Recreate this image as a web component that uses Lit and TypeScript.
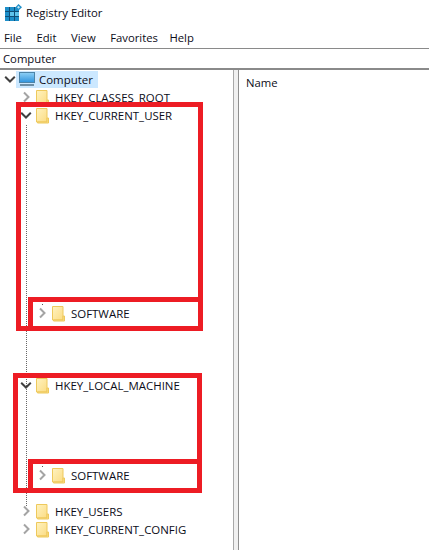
import { LitElement, html, css, svg } from "lit";
import { customElement } from "lit/decorators.js";

const folder = svg`<svg class="folder" width="14" height="17" viewBox="0 0 14 17">
  <defs><linearGradient id="fg" x1="0" y1="0" x2="1" y2="1"><stop offset="0" stop-color="#fff3c0"/><stop offset="1" stop-color="#fbdc84"/></linearGradient></defs>
  <path d="M.5 1.500h10.500v13.500H.5z" fill="url(#fg)" stroke="#eec95c"/>
  <path d="M11 11h1.500v5H1.500V15H11z" fill="#fbe08f" stroke="#eec95c" stroke-width="1"/>
</svg>`;
const chevR = html`<svg class="chev" width="9" height="12" viewBox="0 0 9 12"><path d="M2 1.500 6.500 6 2 10.500" fill="none" stroke="#a4a4a4" stroke-width="2"/></svg>`;
const chevD = html`<svg class="chev" width="12" height="9" viewBox="0 0 12 9"><path d="M1.200 1.800 6 6.500l4.800-4.700" fill="none" stroke="#404040" stroke-width="2"/></svg>`;

@customElement("app-root")
export class AppRoot extends LitElement {
  static styles = css`
    :host { display: block; width: 433px; height: 552px; background: #fff; position: relative; overflow: hidden;
      font-family: "Open Sans", "Noto Sans", sans-serif; font-size: 11.3px; color: #0c0c18; }
    .win { width: 429px; }
    .title { height: 25px; padding: 0 0 1px 5px; display: flex; align-items: center; gap: 4px; }
    .menu { height: 22px; display: flex; padding-left: 4px; align-items: center; }
    .menu span { margin-right: 14.500px; }
    .menu span:nth-child(4) { margin-right: 11.500px; }
    .addr { height: 19px; border-top: 1px solid #8a8a8a; border-bottom: 2px solid #8a8a8a; display: flex; align-items: center; padding-left: 3px; }
    .panes { display: flex; height: 480px; }
    .tree { width: 233px; position: relative; font-size: 11.450px; }
    .split { width: 4px; background: #f0f0f0; border-left: 1px solid #a8a8a8; border-right: 1px solid #8f8f8f; }
    .list { flex: 1; padding: 4px 0 0 7px; line-height: 17px; }
    .row { position: relative; height: 18px; display: flex; align-items: center; white-space: nowrap; gap: 5px; }
    .lv1 { padding-left: 36px; }
    .lv2 { padding-left: 52px; }
    .row.root { width: 80px; background: #cce8ff; margin: 1px 0 0 16px; padding-left: 2px; height: 17px; gap: 3px; }
    .slot { position: absolute; display: flex; align-items: center; justify-content: center; width: 12px; height: 12px; }
    .c0 { left: -12px; }
    .c1 { left: 20px; }
    .c2 { left: 36px; }
    .folder { flex: none; }
    .gap-user { margin-top: 180px; }
    .gap-local { margin-top: 54px; }
    .gap-soft { margin-top: 72px; }
    .gap-users { margin-top: 18px; }
    .dots { position: absolute; left: 26px; top: 55px; height: 381px; border-left: 1px dotted #666; }
    .tick { position: absolute; left: 42px; top: 0; width: 1px; height: 1px; background: #555; }
    .box { position: absolute; border: 5px solid #ed1c24; box-sizing: border-box; }
    .b1 { left: 16px; top: 102px; width: 187px; height: 229px; }
    .b2 { left: 28px; top: 297px; width: 175px; height: 34px; }
    .b3 { left: 13px; top: 373px; width: 189px; height: 120px; }
    .b4 { left: 28px; top: 459px; width: 174px; height: 34px; }
    svg { display: block; }
  `;

  render() {
    return html`
      <div class="win">
        <div class="title">
          <svg width="17" height="17" viewBox="0 0 17 17">
            <rect x="0" y="3" width="14" height="14" fill="#1e8fc9"/>
            <path d="M4.500 3v14M9.500 3v14M0 7.500h14M0 12.500h14" stroke="#0f4f78" stroke-width="1"/>
            <rect x="5" y="8" width="4" height="4" fill="#5fc4ec"/>
            <rect x="10" y="8" width="4" height="4" fill="#5fc4ec"/>
            <path d="M13.500 0 17 3.200 13.500 6.500 10.500 3.200z" fill="#1e8fc9"/>
            <path d="M13.500 1.800 15 3.200 13.500 4.700 12 3.200z" fill="#bfe6f7"/>
          </svg>
          <span>Registry Editor</span>
        </div>
        <div class="menu"><span>File</span><span>Edit</span><span>View</span><span>Favorites</span><span>Help</span></div>
        <div class="addr">Computer</div>
        <div class="panes">
          <div class="tree">
            <div class="dots"></div>
            <div class="row root">
              <span class="slot c0">${chevD}</span>
              <svg width="18" height="17" viewBox="0 0 18 17">
                <defs><linearGradient id="sc" x1="0" y1="0" x2="0" y2="1"><stop offset="0" stop-color="#8fd0f5"/><stop offset="1" stop-color="#2f93dd"/></linearGradient></defs>
                <rect x="1.500" y="1.500" width="15" height="10" fill="url(#sc)" stroke="#4d84a8"/>
                <path d="M2 14h14" stroke="#6f8fa5" stroke-width="2"/>
              </svg>
              <span>Computer</span>
            </div>
            <div class="row lv1"><span class="slot c1">${chevR}</span>${folder}<span>HKEY_CLASSES_ROOT</span></div>
            <div class="row lv1"><span class="slot c1">${chevD}</span>${folder}<span>HKEY_CURRENT_USER</span></div>
            <div class="row lv2 gap-user"><span class="tick"></span><span class="slot c2">${chevR}</span>${folder}<span>SOFTWARE</span></div>
            <div class="row lv1 gap-local"><span class="slot c1">${chevD}</span>${folder}<span>HKEY_LOCAL_MACHINE</span></div>
            <div class="row lv2 gap-soft"><span class="tick"></span><span class="slot c2">${chevR}</span>${folder}<span>SOFTWARE</span></div>
            <div class="row lv1 gap-users"><span class="slot c1">${chevR}</span>${folder}<span>HKEY_USERS</span></div>
            <div class="row lv1"><span class="slot c1">${chevR}</span>${folder}<span>HKEY_CURRENT_CONFIG</span></div>
          </div>
          <div class="split"></div>
          <div class="list">Name</div>
        </div>
      </div>
      <div class="box b1"></div>
      <div class="box b2"></div>
      <div class="box b3"></div>
      <div class="box b4"></div>
    `;
  }
}
